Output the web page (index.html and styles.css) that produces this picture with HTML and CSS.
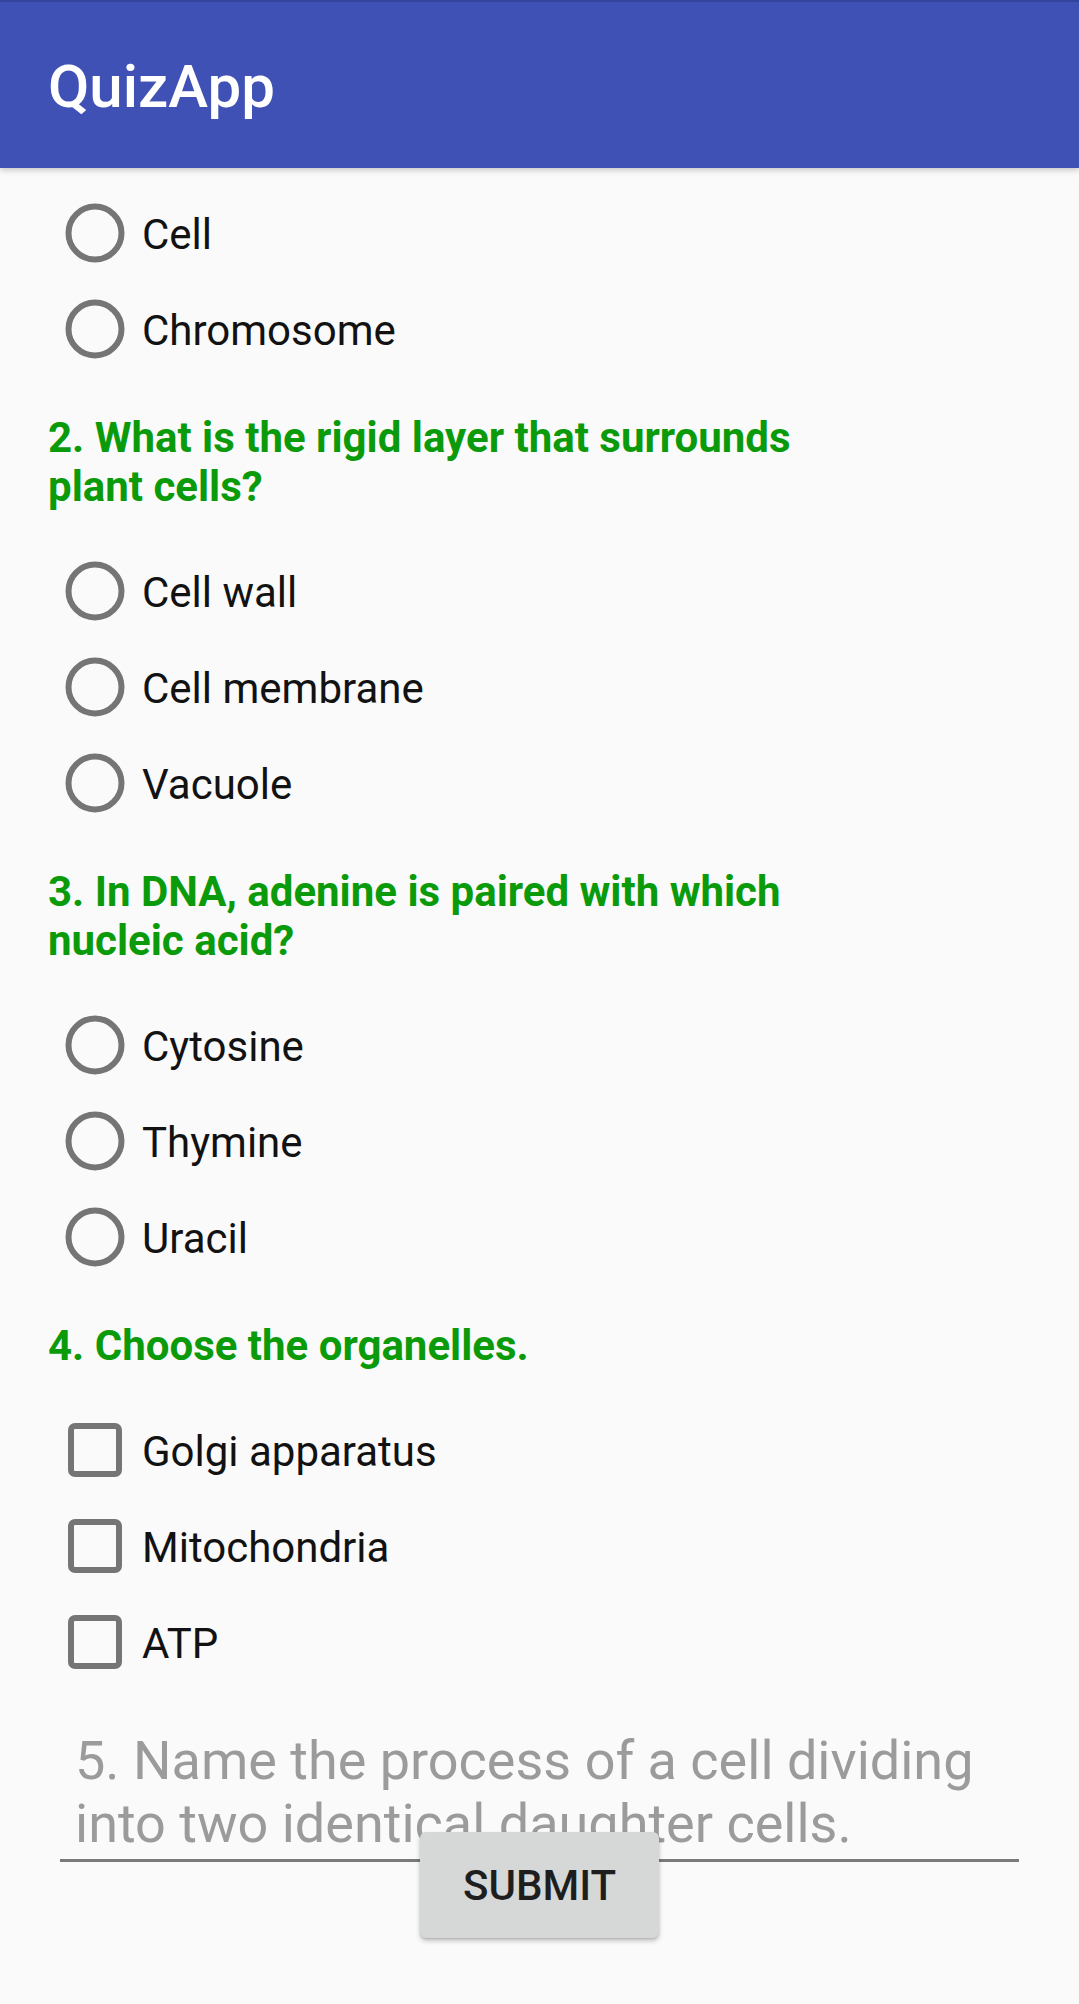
FILE: index.html
```html
<!DOCTYPE html>
<html lang="en">
<head>
<meta charset="utf-8">
<title>QuizApp</title>
<link rel="stylesheet" href="styles.css">
</head>
<body>
<header class="appbar"><h1 class="title">QuizApp</h1></header>
<main class="content">
  <div class="group">
    <div class="option"><span class="icon"><svg class="radio" viewBox="0 0 60 60"><circle cx="30" cy="30" r="26.5"/></svg></span><span class="label">Cell</span></div>
    <div class="option"><span class="icon"><svg class="radio" viewBox="0 0 60 60"><circle cx="30" cy="30" r="26.5"/></svg></span><span class="label">Chromosome</span></div>
  </div>

  <h2 class="question">2. What is the rigid layer that surrounds plant cells?</h2>
  <div class="group">
    <div class="option"><span class="icon"><svg class="radio" viewBox="0 0 60 60"><circle cx="30" cy="30" r="26.5"/></svg></span><span class="label">Cell wall</span></div>
    <div class="option"><span class="icon"><svg class="radio" viewBox="0 0 60 60"><circle cx="30" cy="30" r="26.5"/></svg></span><span class="label">Cell membrane</span></div>
    <div class="option"><span class="icon"><svg class="radio" viewBox="0 0 60 60"><circle cx="30" cy="30" r="26.5"/></svg></span><span class="label">Vacuole</span></div>
  </div>

  <h2 class="question">3. In DNA, adenine is paired with which nucleic acid?</h2>
  <div class="group">
    <div class="option"><span class="icon"><svg class="radio" viewBox="0 0 60 60"><circle cx="30" cy="30" r="26.5"/></svg></span><span class="label">Cytosine</span></div>
    <div class="option"><span class="icon"><svg class="radio" viewBox="0 0 60 60"><circle cx="30" cy="30" r="26.5"/></svg></span><span class="label">Thymine</span></div>
    <div class="option"><span class="icon"><svg class="radio" viewBox="0 0 60 60"><circle cx="30" cy="30" r="26.5"/></svg></span><span class="label">Uracil</span></div>
  </div>

  <h2 class="question">4. Choose the organelles.</h2>
  <div class="group">
    <div class="option"><span class="icon"><svg class="check" viewBox="0 0 54 54"><rect x="3" y="3" width="48" height="48" rx="4"/></svg></span><span class="label">Golgi apparatus</span></div>
    <div class="option"><span class="icon"><svg class="check" viewBox="0 0 54 54"><rect x="3" y="3" width="48" height="48" rx="4"/></svg></span><span class="label">Mitochondria</span></div>
    <div class="option"><span class="icon"><svg class="check" viewBox="0 0 54 54"><rect x="3" y="3" width="48" height="48" rx="4"/></svg></span><span class="label">ATP</span></div>
  </div>

  <div class="edit"><span class="hint">5. Name the process of a cell dividing into two identical daughter cells.</span></div>
  <button class="submit" type="button">Submit</button>
</main>
</body>
</html>
```

FILE: styles.css
```css
html, body {
  margin: 0;
  padding: 0;
  background: #fafafa;
}
body {
  font-family: Roboto, "Noto Sans", "Liberation Sans", sans-serif;
  width: 1079px;
  height: 2004px;
  overflow: hidden;
}
.appbar {
  box-sizing: border-box;
  height: 168px;
  background: #3f51b5;
  border-top: 2px solid #34449e;
  padding: 4px 48px 0;
  display: flex;
  align-items: center;
  box-shadow: 0 2px 6px rgba(0, 0, 0, 0.22);
  position: relative;
  z-index: 1;
}
.title {
  margin: 0;
  color: #ffffff;
  font-size: 60px;
  font-weight: 500;
  line-height: 70px;
}
.content {
  padding: 17px 48px 0;
}
.group {
  display: flex;
  flex-direction: column;
}
.option {
  height: 96px;
  display: flex;
  align-items: center;
}
.icon {
  width: 94px;
  display: flex;
  justify-content: center;
  align-items: center;
}
.radio {
  width: 60px;
  height: 60px;
  display: block;
}
.radio circle {
  fill: none;
  stroke: #757575;
  stroke-width: 6;
}
.check {
  width: 54px;
  height: 54px;
  display: block;
}
.check rect {
  fill: none;
  stroke: #757575;
  stroke-width: 6;
}
.label {
  font-size: 42px;
  color: #121212;
  line-height: 49px;
  padding-top: 3px;
}
.question {
  margin: 36px 0 32px;
  width: 800px;
  font-size: 42px;
  line-height: 49px;
  font-weight: 700;
  color: #0a9a0a;
}
.edit {
  margin: 39px 12px 0;
  padding: 0 0 4px 15px;
  border-bottom: 3px solid #7a7a7a;
}
.hint {
  display: block;
  font-size: 54px;
  line-height: 63px;
  color: #9b9b9b;
}
.submit {
  display: block;
  box-sizing: border-box;
  width: 239px;
  height: 106px;
  margin: -30px auto 0;
  padding: 0;
  border: none;
  border-radius: 6px;
  background: #d6d7d7;
  box-shadow: 0 3px 5px rgba(0, 0, 0, 0.22), 0 1px 2px rgba(0, 0, 0, 0.12);
  font-family: Roboto, "Noto Sans", "Liberation Sans", sans-serif;
  font-size: 42px;
  font-weight: 500;
  text-transform: uppercase;
  color: #1e1e1e;
  position: relative;
}
```
